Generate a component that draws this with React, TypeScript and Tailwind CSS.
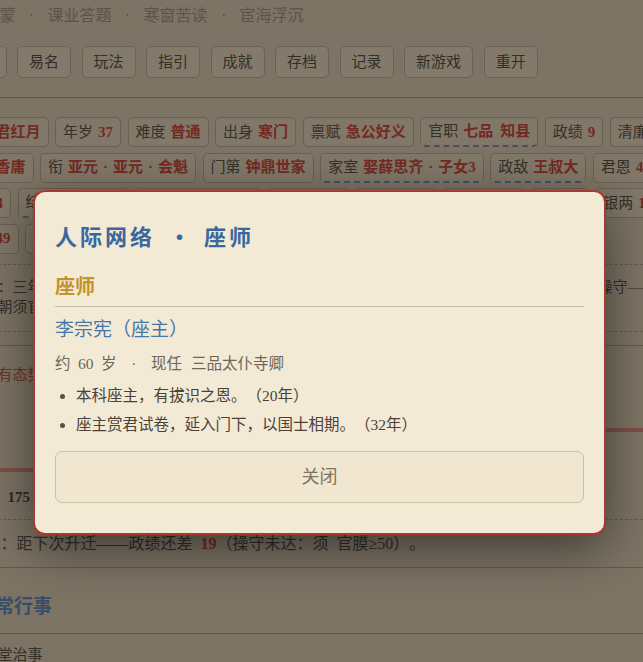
import type { ReactNode } from "react";

function Tag({ label, value, dashed }: { label: string; value: ReactNode; dashed?: boolean }) {
  return (
    <div
      className={`flex h-[30px] shrink-0 items-center gap-[5px] rounded-[5px] border border-[#aaa294] bg-[#dcd2c0] px-[7px] text-[15px] leading-none whitespace-nowrap ${
        dashed ? "border-b-2 border-b-[#7082b6] [border-bottom-style:dashed]" : ""
      }`}
    >
      <span className="text-[#424242]">{label}</span>
      <span className="font-bold text-[#c03632]">{value}</span>
    </div>
  );
}

function Sep() {
  return <span className="inline-block w-[15px] text-center">·</span>;
}

const navItems = ["启蒙", "课业答题", "寒窗苦读", "宦海浮沉"];
const buttons = ["设置", "易名", "玩法", "指引", "成就", "存档", "记录", "新游戏", "重开"];

export default function App() {
  return (
    <div className="relative h-[662px] w-full overflow-hidden bg-[#d4cab8] text-[#424242] [font-family:'Liberation_Serif','Noto_Sans_CJK_SC',serif] [text-spacing-trim:space-all]">
      <div className="-ml-[47.5px] w-[760px]">
        {/* header */}
        <div className="border-b border-[#9e968a] pb-[19px]">
          <div className="flex h-[32px] items-center pl-[31px] text-[16px] leading-none text-[#8e8a82]">
            {navItems.map((n, i) => (
              <span key={n} className="flex items-center">
                {i > 0 && <span className="inline-block w-[32px] text-center">·</span>}
                <span>{n}</span>
              </span>
            ))}
          </div>
          <div className="mt-[14px] flex gap-[10.5px]">
            {buttons.map((b) => (
              <button
                key={b}
                className="h-[32px] shrink-0 rounded-[5px] border border-[#aea698] bg-[#e0d6c4] px-[11px] text-[15px] leading-none text-[#3e3e3e]"
              >
                {b}
              </button>
            ))}
          </div>
        </div>

        {/* status card */}
        <div className="border-b border-[#9e968a] pb-[13px]">
          <div className="flex flex-col gap-[5.5px] pt-[19px]">
            <div className="flex gap-[6.5px]">
              <Tag label="姓名" value="君红月" />
              <Tag label="年岁" value="37" />
              <Tag label="难度" value="普通" />
              <Tag label="出身" value="寒门" />
              <Tag label="禀赋" value="急公好义" />
              <Tag label="官职" dashed value={<>七品<span className="ml-[7px]">知县</span></>} />
              <Tag label="政绩" value="9" />
              <Tag label="清廉" value="58" />
            </div>
            <div className="flex gap-[6.5px]">
              <Tag label="品性" value="香庸" />
              <Tag label="衔" value={<>亚元<Sep />亚元<Sep />会魁</>} />
              <Tag label="门第" value="钟鼎世家" />
              <Tag label="家室" dashed value={<>娶薛思齐<Sep />子女3</>} />
              <Tag label="政敌" dashed value="王叔大" />
              <Tag label="君恩" value="42" />
            </div>
            <div className="flex gap-[6.5px]">
              <Tag label="声望" value="4" />
              <Tag label="结交" dashed value="同年四人" />
              <Tag label="田产" value="良田三十亩" />
              <Tag label="仆从" value="二人" />
              <Tag label="官声" value="清正" />
              <Tag label="体魄" value="康健" />
              <Tag label="书吏" value="3" />
              <Tag label="银两" value="1350" />
            </div>
            <div className="flex gap-[6.5px]">
              <Tag label="体力" value="49" />
              <Tag label="心境" value="平和" />
              <Tag label="声誉" value="渐起" />
            </div>
          </div>
          <div className="mt-[10px] border-y border-dashed border-[#98968e] pt-[12.5px] pb-[14px] text-[15px] leading-[20px] whitespace-nowrap">
            <p>考满期：三年一考，以政绩、操守定其升黜，政绩足而操守亏者不得迁，政绩未足者亦须待满。凡操守——官声为先。</p>
            <p>故历年朝须官声、政绩两全，方可望迁转。</p>
          </div>
        </div>

        {/* situation */}
        <div className="border-b border-[#9e968a] pt-[18px]">
          <div className="grid grid-cols-2 gap-x-[10px]">
            <div>
              <div className="h-[22px] text-[15px] leading-[22px] text-[#b64246]">朝野各有态势</div>
              <div className="mt-[82px] h-[4px] bg-[#da7e7a]" />
              <div className="mt-[15px] flex h-[20px] items-center text-[15px] leading-[20px]">
                <span>累计俸</span>
                <span className="ml-[10px] font-bold text-[#343434]">175</span>
              </div>
            </div>
            <div>
              <div className="h-[22px] text-[15px] leading-[22px] text-[#b64246]">同僚动向</div>
              <div className="mt-[42px] h-[4px] bg-[#da7e7a]" />
            </div>
          </div>
          <div className="mt-[12px] flex items-center border-t border-dashed border-[#98968e] pt-[13px] pb-[12px] text-[16px] leading-[22px] whitespace-nowrap">
            <span>升迁谱：距下次升迁——政绩还差</span>
            <span className="ml-[8px] font-bold text-[#c03632]">19</span>
            <span>（操守未达：须</span>
            <span className="ml-[8px]">官膜≥50）。</span>
          </div>
        </div>

        {/* daily */}
        <div className="border-b border-[#9e968a] pt-[23px] pb-[14px] pl-[23.5px] text-[19px] leading-[28px] font-bold text-[#4a7fc0] [font-family:'Noto_Sans_CJK_SC',sans-serif]">
          日常行事
        </div>
        <div className="pt-[10px] text-[15px] leading-[22px]">一、升堂治事</div>
      </div>

      {/* modal */}
      <div className="absolute inset-0 flex items-start justify-center bg-[rgba(38,30,18,0.5)] pt-[190px] pr-[4px]">
        <div className="w-[573px] rounded-[12px] border-2 border-[#a8392e] bg-[#f3ead6] px-[20px] pt-[28px] pb-[30px] shadow-[0_14px_50px_rgba(0,0,0,0.5)]">
          <div className="flex items-center text-[22px] leading-[30px] font-bold text-[#3a689e] [font-family:'Noto_Sans_CJK_SC',sans-serif]">
            <span className="tracking-[3px]">人际网络</span>
            <span className="inline-block w-[49px] text-center">•</span>
            <span className="tracking-[3px]">座师</span>
          </div>
          <div className="mt-[23px] border-b border-[#cbbfa3] pb-[5px] text-[20px] leading-[28px] font-bold text-[#c4922a]">
            座师
          </div>
          <div className="mt-[9px] text-[19px] leading-[28px] text-[#4876a8]">李宗宪（座主）</div>
          <div className="mt-[8px] flex items-center text-[15.5px] leading-[24px] text-[#6e6658]">
            <span>约</span>
            <span className="ml-[7.5px]">60</span>
            <span className="ml-[7.5px]">岁</span>
            <span className="inline-block w-[34.5px] text-center">·</span>
            <span>现任</span>
            <span className="ml-[9px]">三品太仆寺卿</span>
          </div>
          <ul className="mt-[8px] flex flex-col gap-[5px] text-[15.5px] leading-[24px] text-[#4a4236]">
            <li className="flex h-[24px] items-center">
              <span className="mr-[11.5px] ml-[4.5px] h-[5px] w-[5px] rounded-full bg-[#5a5044]" />
              本科座主，有拔识之恩。（20年）
            </li>
            <li className="flex h-[24px] items-center">
              <span className="mr-[11.5px] ml-[4.5px] h-[5px] w-[5px] rounded-full bg-[#5a5044]" />
              座主赏君试卷，延入门下，以国士相期。（32年）
            </li>
          </ul>
          <button className="mt-[14px] h-[52px] w-full rounded-[7px] border border-[#cdbf9f] bg-[#f1e7d1] text-[18px] text-[#7d7462]">
            关闭
          </button>
        </div>
      </div>
    </div>
  );
}
